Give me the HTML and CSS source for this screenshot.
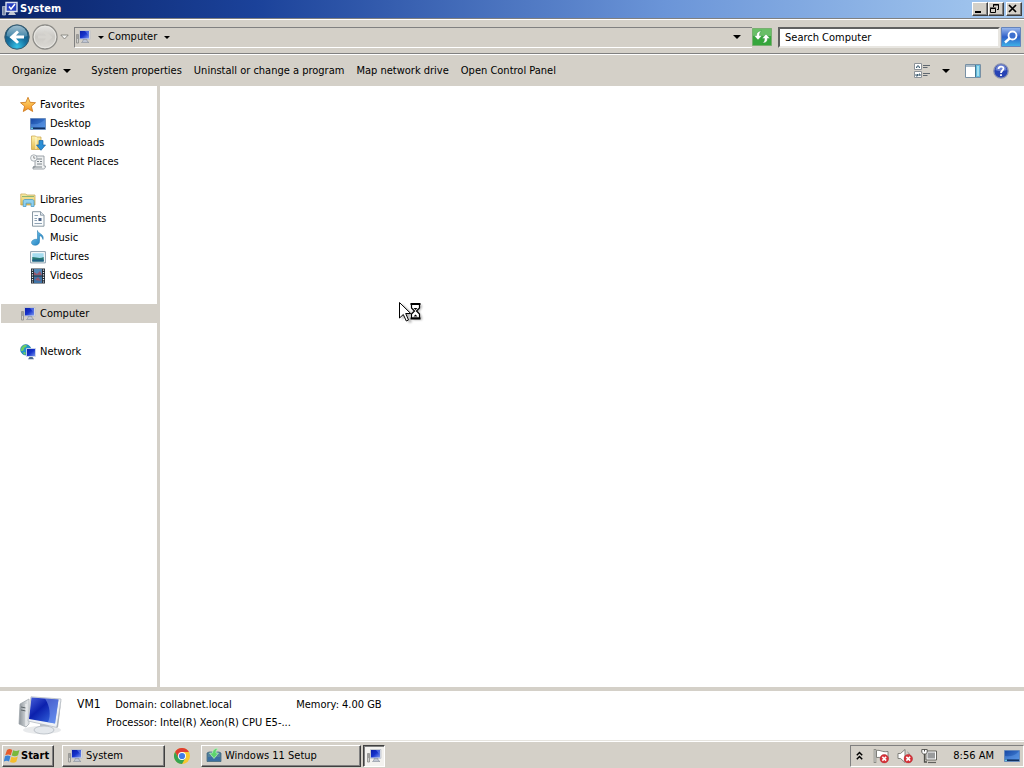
FILE: index.html
```html
<!DOCTYPE html>
<html lang="en">
<head>
<meta charset="utf-8">
<meta name="viewport" content="width=device-width, initial-scale=1">
<title>System</title>
<link rel="stylesheet" href="styles.css">
</head>
<body>
<svg class="defs" aria-hidden="true">
  <defs>
    <linearGradient id="screen" x1="0" y1="0" x2="1" y2="1"><stop offset="0" stop-color="#0a1ea8"/><stop offset=".5" stop-color="#1633cc"/><stop offset="1" stop-color="#7f9cf0"/></linearGradient>
    <linearGradient id="desk" x1="0" y1="0" x2="1" y2="1"><stop offset="0" stop-color="#1746a4"/><stop offset="1" stop-color="#4a90e2"/></linearGradient>
    <linearGradient id="gold" x1="0" y1="0" x2="0" y2="1"><stop offset="0" stop-color="#fff3b0"/><stop offset="1" stop-color="#e3bb4e"/></linearGradient>
    <linearGradient id="star" x1="0" y1="0" x2="0" y2="1"><stop offset="0" stop-color="#ffe27a"/><stop offset="1" stop-color="#f4901e"/></linearGradient>
    <linearGradient id="note" x1="0" y1="0" x2="1" y2="1"><stop offset="0" stop-color="#7fd0f4"/><stop offset="1" stop-color="#1374b8"/></linearGradient>
    <linearGradient id="case" x1="0" y1="0" x2="1" y2="0"><stop offset="0" stop-color="#8b9298"/><stop offset="1" stop-color="#eef1f3"/></linearGradient>
    <radialGradient id="back" cx=".5" cy=".9" r=".8"><stop offset="0" stop-color="#35c3e8"/><stop offset=".5" stop-color="#16709f"/><stop offset="1" stop-color="#1b5272"/></radialGradient>
    <linearGradient id="shine" x1="0" y1="0" x2="0" y2="1"><stop offset="0" stop-color="#c9e2ee"/><stop offset="1" stop-color="#4b8cae"/></linearGradient>
    <linearGradient id="fwd" x1="0" y1="0" x2="0" y2="1"><stop offset="0" stop-color="#e6e5e2"/><stop offset=".5" stop-color="#cbc9c4"/><stop offset="1" stop-color="#dedcd7"/></linearGradient>
    <symbol id="i-computer" viewBox="0 0 16 16">
      <path d="M1.500 5.500h2v8.500h-2z" fill="#d2d2d0" stroke="#8a8a88" stroke-width=".8"/><path d="M2 7h1M2 9h1" stroke="#555" stroke-width=".8"/>
      <path d="M4.500 1.500h10.500v8.800H4.500z" fill="#dfe3ee" stroke="#b5bac5" stroke-width=".7"/><path d="M5 2h9v7.500H5z" fill="url(#screen)"/><path d="M10 2h4v5z" fill="#6d87e8" opacity=".6"/>
      <path d="M8 10.500h4v1.500l2 1.500H6.500L8 12z" fill="#c0c6d4" stroke="#858d9a" stroke-width=".6"/>
    </symbol>
    <symbol id="i-title" viewBox="0 0 16 16">
      <path d="M.5 5.500h3v8.500h-3z" fill="#7f8da8" stroke="#c4cede" stroke-width=".7"/><path d="M4 1.500h11v9H4z" fill="#263fc0" stroke="#d9e0ee" stroke-width="1.400"/><path d="M7 5.500l2 2.500 4-5" fill="none" stroke="#fff" stroke-width="1.500"/><path d="M8 11h4l2 3H6z" fill="#c5cad4"/>
    </symbol>
    <symbol id="i-desktop" viewBox="0 0 16 16"><path d="M.5 2.500h15v11H.5z" fill="url(#desk)" stroke="#5f84b8" stroke-width=".8"/><path d="M1 8c6 1 11-1 14-5v8H1z" fill="#6da5f0" opacity=".4"/><path d="M1 11.500h14V13H1z" fill="#12305f"/><path d="M1 11.500h2V13H1z" fill="#62c7e2"/></symbol>
    <symbol id="i-star" viewBox="0 0 16 16"><path d="M8 .3l2.100 5 5.400.4-4.100 3.500 1.300 5.300L8 11.700 3.300 14.500l1.300-5.300L.5 5.700l5.400-.4z" fill="url(#star)" stroke="#cb7518" stroke-width=".8"/></symbol>
    <symbol id="i-downloads" viewBox="0 0 16 16"><path d="M1.500 1h4l1 1H11v12.500H1.500z" fill="url(#gold)" stroke="#c9a246" stroke-width=".7"/><path d="M6 2v12" stroke="#fffbd8"/><path d="M9 5.500h4V10h2.500L11 15.300 6.500 10H9z" fill="#2c8fd6" stroke="#1763a5" stroke-width=".7"/></symbol>
    <symbol id="i-recent" viewBox="0 0 16 16"><path d="M5 2h9v10h1.500c0 2-1 3-2 3H3v-2h2z" fill="#eef0f1" stroke="#858d94" stroke-width=".8"/><path d="M7 5h5M7 7.500h2m1 0h2M7 10h5M3 13h9" stroke="#6f7880" stroke-width=".9"/><circle cx="3.800" cy="4" r="3.200" fill="#f4f6f7" stroke="#98a0a6" stroke-width=".8"/><path d="M3.800 2v2.200h1.500" fill="none" stroke="#666" stroke-width=".7"/></symbol>
    <symbol id="i-libraries" viewBox="0 0 16 16"><path d="M.8 2h5l1 1h8.200v10H.8z" fill="url(#gold)" stroke="#c2a04a" stroke-width=".7"/><path d="M2 4.500h12" stroke="#8fb573" stroke-width="1.200"/><path d="M3.200 14.500V9.200C3.200 8 4 7.500 5 7.500h7c1 0 2 .6 2 1.700v5.300h-2.900v-3.300H6v3.300z" fill="#8fd0ef" stroke="#4d9cc8" stroke-width=".8"/></symbol>
    <symbol id="i-documents" viewBox="0 0 16 16"><path d="M2.500.7h8l3.500 3.500v11H2.500z" fill="#fafcfd" stroke="#7c8c99" stroke-width=".9"/><path d="M10.500.7v3.500H14" fill="#dbe4ea" stroke="#7c8c99" stroke-width=".8"/><path d="M4.500 4.500H8m-3.500 3H7m-2.500 2H7m-2.500 3H12" stroke="#8fa3b5"/><path d="M8.500 7h3v3h-3z" fill="#4d6489"/></symbol>
    <symbol id="i-music" viewBox="0 0 16 16"><path d="M7.500.5c.4 3.500 7 3.200 5.500 9-.5-2.500-2-3.500-3.500-3.800v5.800c0 2.200-1.800 3.800-4.300 3.800-2.200 0-3.700-1-3.700-2.700 0-2.300 3-3.800 6-3.200z" fill="url(#note)" stroke="#1772ab" stroke-width=".5"/></symbol>
    <symbol id="i-pictures" viewBox="0 0 16 16"><path d="M.6 2.600h14.800v11.300H.6z" fill="#fff" stroke="#8195a5" stroke-width=".9"/><path d="M2.300 4.200h11.400v8.200H2.300z" fill="#a5dcef"/><path d="M2.300 8c4 0 7 2 11.400 0v4.500H2.300z" fill="#287a72"/><path d="M2.300 10.500h11.400v2H2.300z" fill="#1f5f86"/></symbol>
    <symbol id="i-videos" viewBox="0 0 16 16"><path d="M1 .5h14v15H1z" fill="#222a34"/><path d="M4 1h8v6.500H4z" fill="#5588b8"/><path d="M4 8.500h8V15H4z" fill="#3f74a6"/><path d="M4 4l3 2 3-3 2 4H4zM5 12l3-3 3 4z" fill="#96586e"/><path d="M2.500 1.500v13M13.500 1.500v13" stroke="#e8edf2" stroke-width="1.200" stroke-dasharray="1.200 1.200"/></symbol>
    <symbol id="i-network" viewBox="0 0 16 16"><circle cx="5.800" cy="5.800" r="5.200" fill="#2495ca" stroke="#176b9e" stroke-width=".6"/><path d="M2 3c2-3 5-2 5-1s-3 1-3 3-2 2-3 2c0-2 0-3 1-4zM4 8c2 0 2 2 1 3L3 9z" fill="#6dcf61"/><path d="M6.500 4.500h9v8h-9z" fill="url(#screen)" stroke="#cfd8e8" stroke-width=".9"/><path d="M9.500 13h3l1.500 2.200H8z" fill="#49698e"/></symbol>
    <symbol id="i-setup" viewBox="0 0 16 16"><path d="M1 5l2-1h10l2 1v8.500H1z" fill="#52809c" stroke="#385f78" stroke-width=".7"/><path d="M2 9h12v4H2z" fill="#3b6fa2"/><path d="M12 .5C8.500 0 6.500 2.500 6.500 5H3.500l4.500 5.500L12.500 5H10c0-2 .5-3.200 2-4.500z" fill="#5dd46e" stroke="#c4f3c6" stroke-width=".7"/></symbol>
    <symbol id="i-badge" viewBox="0 0 10 10"><circle cx="5" cy="5" r="4.500" fill="#d8323a" stroke="#a91c22" stroke-width=".5"/><path d="M3 3l4 4M7 3L3 7" stroke="#fff" stroke-width="1.600"/></symbol>
  </defs>
</svg>

<header class="titlebar">
  <svg class="icon"><use href="#i-title"/></svg>
  <h1 class="title">System</h1>
  <div class="window-buttons">
    <button class="win-btn" aria-label="Minimize"><svg class="win-glyph" viewBox="0 0 12 10"><path d="M2 8h6" stroke="#000" stroke-width="2"/></svg></button>
    <button class="win-btn" aria-label="Restore"><svg class="win-glyph" viewBox="0 0 12 10"><path d="M4.500 3V.5h5v5H8M4 1h6M1.500 4.500h5v4h-5zM1 4h6" fill="none" stroke="#000"/></svg></button>
    <button class="win-btn win-close" aria-label="Close"><svg class="win-glyph" viewBox="0 0 12 10"><path d="M2 1l7 7M9 1L2 8" stroke="#000" stroke-width="1.700"/></svg></button>
  </div>
</header>

<nav class="navbar" aria-label="Navigation">
  <div class="history">
    <button class="round" aria-label="Back"><svg viewBox="0 0 26 26"><circle cx="13" cy="13" r="12.200" fill="url(#back)" stroke="#3b5d70"/><path d="M2.500 12a10.500 10.500 0 0121 0c-6 2-15 2-21 0z" fill="url(#shine)" opacity=".75"/><path d="M20 11.500h-8l3-3.300-2-1.700-7.500 6.700 7.500 6.600 2-1.800-3-3.400h8z" fill="#fff"/></svg></button>
    <button class="round" aria-label="Forward"><svg viewBox="0 0 26 26"><circle cx="13" cy="13" r="12" fill="url(#fwd)" stroke="#8d8c88" stroke-width="1.300"/><circle cx="13" cy="13" r="10.800" fill="none" stroke="#e9e8e4"/><path d="M6 11.500h8l-3-3.300 2-1.700 7.500 6.700-7.500 6.600-2-1.800 3-3.400H6z" fill="#d6d4cf"/></svg></button>
    <button class="plain" aria-label="Recent pages"><svg class="caret-open" viewBox="0 0 9 6"><path d="M.8 1h7.400L4.500 5z" fill="#f4f4f2" stroke="#85837e" stroke-width=".9"/></svg></button>
  </div>
  <div class="address">
    <svg class="icon"><use href="#i-computer"/></svg>
    <button class="plain crumb-arrow" aria-label="Locations"><span class="caret small"></span></button>
    <button class="plain crumb">Computer</button>
    <button class="plain crumb-arrow" aria-label="Computer contents"><span class="caret small"></span></button>
    <button class="plain address-drop" aria-label="Previous locations"><span class="caret"></span></button>
  </div>
  <button class="plain refresh" aria-label="Refresh"><svg viewBox="0 0 20 18"><path d="M.5.5h19v17H.5z" fill="#36a63c" stroke="#78af70"/><path d="M1 1h18v7H1z" fill="#8cd083" opacity=".6"/><path d="M9.500 3C6 3 4.500 4.500 4.500 7.500H2L6 12l4-4.500H7.500C7.500 5.500 8 4 9.500 3zM10.500 15c3.500 0 5-1.500 5-4.500H18L14 6l-4 4.500h2.500c0 2-.5 3.500-2 4.500z" fill="#fff" stroke="#218a2c" stroke-width=".4"/></svg></button>
  <form class="search">
    <input class="search-box" type="text" value="Search Computer" aria-label="Search Computer">
    <button class="plain search-btn" type="button" aria-label="Search"><svg viewBox="0 0 20 20"><defs><linearGradient id="sb" x1="0" y1="0" x2="0" y2="1"><stop offset="0" stop-color="#9fbcee"/><stop offset=".5" stop-color="#2e60c8"/><stop offset="1" stop-color="#3fb4e8"/></linearGradient></defs><path d="M.5.500h19v19H.5z" fill="url(#sb)" stroke="#6584bc"/><circle cx="11.500" cy="8.500" r="4" fill="#3d70cf" stroke="#fff" stroke-width="1.800"/><path d="M8.500 11.500l-4.500 4" stroke="#fff" stroke-width="2.400"/></svg></button>
  </form>
</nav>

<div class="toolbar" role="toolbar" aria-label="Commands">
  <button class="plain organize">Organize <span class="caret"></span></button>
  <button class="plain">System properties</button>
  <button class="plain">Uninstall or change a program</button>
  <button class="plain">Map network drive</button>
  <button class="plain">Open Control Panel</button>
  <div class="tools">
    <button class="plain view" aria-label="Change your view"><svg class="icon" viewBox="0 0 16 16"><path d="M.5.5h7v6h-7zM.5 8.500h7v6h-7z" fill="#fff" stroke="#8c9298"/><path d="M2 4.500h1V3h2v1.500h1M2 11v2h1.500v-2M5 13v-2h1v2" fill="none" stroke="#3e5c70"/><path d="M9 2.500h7m-7 2h4.500m-4.500 6h7m-7 2h4.500" stroke="#606870"/></svg><span class="caret"></span></button>
    <button class="plain" aria-label="Preview pane"><svg class="icon" viewBox="0 0 16 16"><path d="M.5 1.500h15v13H.5z" fill="#fff" stroke="#7890a4"/><path d="M1 3h9" stroke="#a9bac8" stroke-width="2"/><path d="M10 2h5v12h-5z" fill="#64bade"/><path d="M10.500 2v12" stroke="#437994"/><path d="M12 3h2v10h-2z" fill="#a4e0ef"/></svg></button>
    <button class="plain" aria-label="Get help"><svg class="icon" viewBox="0 0 16 16"><circle cx="8" cy="8" r="7.200" fill="#2743b5" stroke="#8a92b0" stroke-width="1.300"/><path d="M2.500 7a5.500 5.500 0 0111 0c-3 1.500-8 1.500-11 0z" fill="#899be0" opacity=".7"/><path d="M5.500 6c0-3.200 5-3.200 5-.4C10.500 7.600 8 7.500 8 10M8 11.300v1.800" fill="none" stroke="#fff" stroke-width="1.800"/></svg></button>
  </div>
</div>

<div class="content">
  <aside class="sidebar">
    <section class="group">
      <a class="item" href="#favorites"><svg class="icon"><use href="#i-star"/></svg>Favorites</a>
      <a class="item child" href="#desktop"><svg class="icon"><use href="#i-desktop"/></svg>Desktop</a>
      <a class="item child" href="#downloads"><svg class="icon"><use href="#i-downloads"/></svg>Downloads</a>
      <a class="item child" href="#recent"><svg class="icon"><use href="#i-recent"/></svg>Recent Places</a>
    </section>
    <section class="group">
      <a class="item" href="#libraries"><svg class="icon"><use href="#i-libraries"/></svg>Libraries</a>
      <a class="item child" href="#documents"><svg class="icon"><use href="#i-documents"/></svg>Documents</a>
      <a class="item child" href="#music"><svg class="icon"><use href="#i-music"/></svg>Music</a>
      <a class="item child" href="#pictures"><svg class="icon"><use href="#i-pictures"/></svg>Pictures</a>
      <a class="item child" href="#videos"><svg class="icon"><use href="#i-videos"/></svg>Videos</a>
    </section>
    <section class="group">
      <a class="item selected" href="#computer" aria-current="page"><svg class="icon"><use href="#i-computer"/></svg>Computer</a>
    </section>
    <section class="group">
      <a class="item" href="#network"><svg class="icon"><use href="#i-network"/></svg>Network</a>
    </section>
  </aside>
  <main class="pane"></main>
</div>

<section class="details" aria-label="Details">
  <svg class="details-art" viewBox="0 0 46 42">
    <defs><linearGradient id="big" x1="0" y1="0" x2="1" y2="1"><stop offset="0" stop-color="#4a62dc"/><stop offset=".4" stop-color="#0b20ad"/><stop offset="1" stop-color="#3f78ea"/></linearGradient></defs>
    <ellipse cx="24" cy="34" rx="19" ry="4" fill="#d9dcdf" opacity=".6"/>
    <path d="M2 8l9-5v25l-3 3-7-3z" fill="url(#case)" stroke="#9ba2a7" stroke-width=".7"/><path d="M3 11l5 1M3 14l5 1" stroke="#5f666b"/><path d="M8 8v22" stroke="#f5f6f7"/>
    <path d="M22 28h9l-1 5h-8z" fill="#b9c1c9"/><ellipse cx="26" cy="34" rx="10" ry="4" fill="#e4e8ec" stroke="#b4bac1" stroke-width=".8"/>
    <path d="M13 .8l30 2.200-4 28.500L10 25z" fill="#eef1f5" stroke="#b4bac2" stroke-width=".8"/><path d="M13.500 1.500l27 2-3.500 24L11 23z" fill="url(#big)"/><path d="M27 2.500l13.500 1-3.500 24-7-1.200c3-7 2-16-3-23.800z" fill="#9ab5fb" opacity=".45"/>
    <path d="M43.500 3l-3.500 28.500-1.500-.5z" fill="#aab0b8"/>
  </svg>
  <div class="details-name">VM1</div>
  <dl class="facts">
    <dt>Domain:</dt><dd>collabnet.local</dd>
    <dt>Memory:</dt><dd>4.00 GB</dd>
    <dt>Processor:</dt><dd>Intel(R) Xeon(R) CPU E5-...</dd>
  </dl>
</section>

<footer class="taskbar">
  <button class="task start"><svg class="icon" viewBox="0 0 16 16"><path d="M3 2c2-1.500 3.500-1 5.300 0L6.800 7.300C5 6.300 3.500 6.300 1.200 7.300z" fill="#e65c2c"/><path d="M9.200 2.300c2 1 4 1 6.300-.3L14 7.300c-2 1.200-4 1.200-6.300.2z" fill="#79b83c"/><path d="M1 8.300c2-1.200 3.500-1 5.500 0L5 13.500c-1.600-1-3.500-1-5.300.2z" fill="#3a83d6"/><path d="M7.400 8.700c2 1 4 1 6.400-.2L12.300 13.700c-2 1.200-4 1.200-6.300.2z" fill="#f5bd2c"/></svg>Start</button>
  <button class="task app-system"><svg class="icon"><use href="#i-computer"/></svg>System</button>
  <button class="plain chrome" aria-label="Google Chrome"><svg class="icon" viewBox="0 0 16 16"><circle cx="8" cy="8" r="8" fill="#f7c831"/><path d="M1.070 4A8 8 0 0114.930 4H8L4.540 10z" fill="#df3e33"/><path d="M1.070 4A8 8 0 008 16l3.460-6H4.540z" fill="#35a452"/><circle cx="8" cy="8" r="4" fill="#fff"/><circle cx="8" cy="8" r="3.100" fill="#3f7de8"/></svg></button>
  <button class="task app-setup"><svg class="icon"><use href="#i-setup"/></svg>Windows 11 Setup</button>
  <button class="task active" aria-label="Computer"><svg class="icon"><use href="#i-computer"/></svg></button>
  <div class="tray">
    <button class="plain" aria-label="Show hidden icons"><svg class="chevrons" viewBox="0 0 7 10"><path d="M.8 4.200l2.700-2.700 2.700 2.700M.8 8.200l2.700-2.700 2.700 2.700" fill="none" stroke="#000" stroke-width="1.500"/></svg></button>
    <button class="plain" aria-label="Action Center"><svg class="icon" viewBox="0 0 16 16"><path d="M2 1v14" stroke="#66665f" stroke-width="2.400"/><path d="M2 1.500v13" stroke="#fff"/><path d="M3.500 2.500c4-1 5 2 11.500 1v7c-5 1-7.500-2-11.500-1z" fill="#fff" stroke="#74746f" stroke-width=".9"/><use href="#i-badge" x="6.500" y="6" width="9.500" height="9.500"/></svg></button>
    <button class="plain" aria-label="Volume muted"><svg class="icon" viewBox="0 0 16 16"><path d="M1 5.500h2.500L8 1.500v13L3.500 10.500H1z" fill="#fff" stroke="#777772" stroke-width=".9"/><path d="M10.500 4c1.500 1 2 2 2 4" fill="none" stroke="#888"/><use href="#i-badge" x="6.500" y="6" width="9.500" height="9.500"/></svg></button>
    <button class="plain" aria-label="Network"><svg class="icon" viewBox="0 0 16 16"><path d="M5 3h10.500v9H5z" fill="#fff" stroke="#55554f" stroke-width=".9"/><path d="M6.500 4.500h7.500v6H6.500z" fill="#999b9c"/><path d="M7 14.500h8" stroke="#62625e" stroke-width="1.200"/><path d="M3.500 5v9h2.500" fill="none" stroke="#50504c" stroke-width="1.300"/><path d="M.8 1.500h5.400v3L4.500 6h-2L.8 4.500z" fill="#fff" stroke="#50504c" stroke-width=".9"/><path d="M3.500 1v2.500" stroke="#50504c"/></svg></button>
    <time class="clock">8:56 AM</time>
    <button class="plain" aria-label="Show desktop"><svg class="icon"><use href="#i-desktop"/></svg></button>
  </div>
</footer>

<svg class="cursor" viewBox="0 0 28 24" aria-hidden="true">
  <defs><filter id="soft"><feGaussianBlur stdDeviation="1"/></filter></defs>
  <path d="M4 3v16l4-4 3 7 3-1-3-7h5zM15 4h9v2l-3 5 3 5v3h-9z" opacity=".3" filter="url(#soft)"/>
  <path d="M1.500 1.500v15.500l3.800-3.500 3 6.500 2.200-1-2.800-6.500h5z" fill="#fff" stroke="#000"/>
  <path d="M13.500 3v4l3 3-3 3v4h8v-4l-3-3 3-3V3z" fill="#fff" stroke="#000" stroke-width="1.200"/><path d="M12.500 3h10M12.500 17.500h10" stroke="#000" stroke-width="1.800"/><path d="M15.500 7h4l-2 2zM15.500 15.500l2-2 2 2z" fill="#000"/>
</svg>
</body>
</html>
```
FILE: styles.css
```css
* { box-sizing: border-box; }

body {
  margin: 0;
  height: 100vh;
  display: flex;
  flex-direction: column;
  overflow: hidden;
  background: #fff;
  color: #000;
  font: 11px/14px Tahoma, "DejaVu Sans Condensed", "Noto Sans", sans-serif;
}

button, input { font: inherit; color: inherit; margin: 0; }
button { padding: 0; white-space: nowrap; }
svg { display: block; }

.defs { position: absolute; width: 0; height: 0; }
.icon { width: 16px; height: 16px; flex: none; }
.plain { border: 0; background: none; display: flex; align-items: center; }

.caret {
  border: 4px solid transparent;
  border-top-color: #000;
  border-bottom: 0;
}
.caret.small { border-width: 3px; border-bottom: 0; }

/* Title bar */
.titlebar {
  display: flex;
  align-items: center;
  gap: 2px;
  height: 18px;
  flex: none;
  padding: 0 2px;
  background: linear-gradient(90deg, #0a246a, #1b429a 25%, #6b95d8 65%, #a6caf0);
}
.title { margin: 0; color: #fff; font-size: 11px; line-height: 14px; flex: 1; }
.window-buttons { display: flex; }
.win-btn {
  width: 16px;
  height: 14px;
  background: #d4d0c8;
  border: 1px solid;
  border-color: #fff #404040 #404040 #fff;
  box-shadow: inset -1px -1px #808080;
}
.win-close { margin-left: 2px; }
.win-glyph { width: 12px; height: 10px; }

/* Address row */
.navbar {
  display: flex;
  align-items: center;
  height: 36px;
  flex: none;
  padding: 2px 3px 0 4px;
  background: #d4d0c8;
  border-top: 1px solid #808080;
  border-bottom: 1px solid #808080;
  box-shadow: inset 0 1px #fff;
}
.history { display: flex; align-items: center; gap: 2px; width: 70px; }
.round { width: 26px; height: 26px; border: 0; background: none; border-radius: 50%; padding: 0; }
.caret-open { width: 9px; height: 6px; }
.address {
  flex: 1;
  display: flex;
  align-items: center;
  height: 21px;
  border-top: 1px solid #808080;
  border-left: 1px solid #808080;
  border-bottom: 1px solid #fff;
}
.crumb-arrow { padding: 0 4px 0 7px; }
.address-drop { margin-left: auto; padding: 0 11px; }
.refresh { width: 20px; height: 18px; }
.refresh svg { width: 20px; height: 18px; }
.search { display: flex; width: 243px; margin-left: 6px; gap: 1px; }
.search-box {
  flex: 1;
  min-width: 0;
  height: 21px;
  padding: 0 5px;
  border: 2px solid;
  border-color: #606060 #e8e6e1 #e8e6e1 #606060;
  background: #fff;
  outline: 0;
}
.search-btn svg { width: 20px; height: 20px; }

/* Command bar */
.toolbar {
  display: flex;
  align-items: center;
  gap: 12px;
  height: 32px;
  flex: none;
  padding: 0 15px 0 12px;
  background: #d4d0c8;
  border-top: 1px solid #fff;
}
.organize { gap: 7px; margin-right: 8px; }
.tools { display: flex; align-items: center; gap: 12px; margin-left: auto; }
.view { gap: 12px; margin-right: 3px; }

/* Folder tree and file pane */
.content { flex: 1; display: flex; min-height: 0; }
.sidebar {
  width: 160px;
  flex: none;
  display: flex;
  flex-direction: column;
  gap: 19px;
  padding: 9px 0 0 1px;
  border-right: 3px solid #d4d0c8;
}
.item {
  display: flex;
  align-items: center;
  gap: 4px;
  height: 19px;
  padding: 1px 0 0 19px;
  color: #000;
  text-decoration: none;
}
.child { padding-left: 29px; }
.selected { background: #d4d0c8; }
.pane { flex: 1; }

/* Details pane */
.details {
  display: flex;
  height: 53px;
  flex: none;
  padding: 5px 0 0 18px;
  border-top: 4px solid #d4d0c8;
}
.details-art { width: 46px; height: 42px; margin-right: 13px; }
.details-name { width: 28px; font-size: 12px; padding-top: 1px; }
.facts {
  display: grid;
  grid-template-columns: 52px 132px 44px auto;
  align-content: start;
  gap: 4px 3px;
  margin: 0;
  padding-top: 2px;
}
.facts dt { text-align: right; white-space: nowrap; }
.facts dd { margin: 0; white-space: nowrap; }

/* Taskbar */
.taskbar {
  display: flex;
  align-items: center;
  height: 28px;
  flex: none;
  padding: 2px 0 0 2px;
  background: #d4d0c8;
  border-top: 1px solid #e6e4df;
  box-shadow: inset 0 1px #fff;
}
.task {
  display: flex;
  align-items: center;
  gap: 3px;
  height: 22px;
  padding: 0 4px;
  background: #d4d0c8;
  border: 1px solid;
  border-color: #fff #404040 #404040 #fff;
  box-shadow: inset -1px -1px #808080;
}
.start { width: 52px; padding: 0 1px; gap: 1px; font-weight: bold; margin-right: 8px; }
.app-system { width: 103px; margin-right: 9px; }
.chrome { margin-right: 11px; }
.app-setup { width: 160px; margin-right: 2px; }
.active {
  width: 22px;
  padding: 0 2px;
  background: #f3f2ef;
  border-color: #404040 #fff #fff #404040;
  box-shadow: inset 1px 1px #808080;
}
.tray {
  display: flex;
  align-items: center;
  gap: 8px;
  height: 22px;
  margin-left: auto;
  padding: 0 3px 0 5px;
  border: 1px solid;
  border-color: #808080 #fff #fff #808080;
}
.chevrons { width: 7px; height: 10px; }
.tray .plain:first-child { margin-right: 2px; }
.clock { padding: 0 2px 0 8px; }

/* Busy pointer */
.cursor { position: absolute; left: 398px; top: 301px; width: 28px; height: 24px; }
```
